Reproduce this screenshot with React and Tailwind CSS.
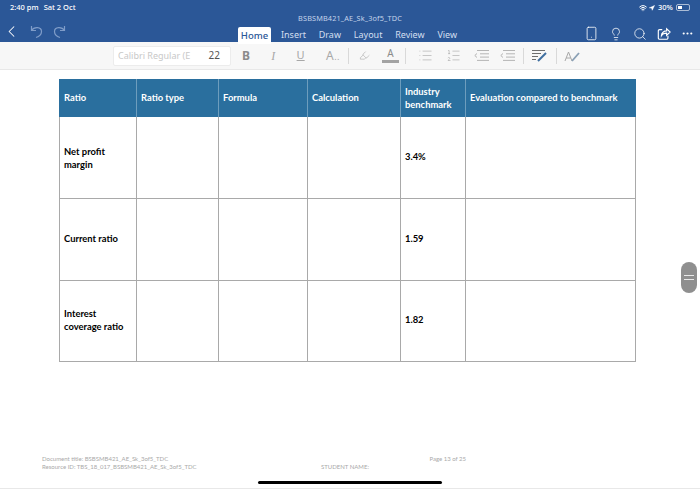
import React from "react";
import {
  ChevronLeft,
  Smartphone,
  Lightbulb,
  Search,
  Ellipsis,
  List,
  ListOrdered,
  Highlighter,
  Wifi,
  Navigation,
} from "lucide-react";

const tabs = ["Insert", "Draw", "Layout", "Review", "View"];

const rows = [
  { name: ["Net profit", "margin"], value: "3.4%", nudge: "pt-[1px]" },
  { name: ["Current ratio"], value: "1.59", nudge: "pb-[2px]" },
  { name: ["Interest", "coverage ratio"], value: "1.82", nudge: "pb-[1px]" },
];

const cols = "grid grid-cols-[78px_82px_89px_93px_65px_170px]";

const Sep = () => <div className="w-px h-[16px] bg-[#d9d9d9]" />;

const UndoIcon = ({ flip }) => (
  <svg
    width="15"
    height="15"
    viewBox="0 0 15 15"
    fill="none"
    stroke="currentColor"
    strokeWidth="1.2"
    className={flip ? "-scale-x-100" : ""}
  >
    <path d="M2.5 2v4.5H7" />
    <path d="M2.5 6.5C5 2.5 12.5 2.5 12.5 7.5C12.5 10.5 10 12.5 7 13.5" />
  </svg>
);

const ShareIcon = () => (
  <svg width="14" height="14" viewBox="0 0 16 16" fill="none" stroke="currentColor" strokeWidth="1.3">
    <path d="M6 3H3a1.5 1.5 0 0 0-1.5 1.5v8A1.5 1.5 0 0 0 3 14h8a1.5 1.5 0 0 0 1.5-1.5V10" />
    <path d="M5 10c0-3.5 3-5.5 6-5.5V2l4 3.7-4 3.8V7c-3 0-5 1.2-6 3z" />
  </svg>
);

const IndentIcon = () => (
  <svg width="15" height="11" viewBox="0 0 15 11" fill="none" stroke="#b5b5b5" strokeWidth="1">
    <path d="M3 .5h12M6 3.8h9M6 7.1h9M3 10.4h12" />
    <path d="M3 3.5L.8 5.5 3 7.5" />
  </svg>
);

const App = () => {
  return (
    <div className="relative w-[700px] h-[489px] overflow-hidden bg-white font-['Noto_Sans',sans-serif]">
      {/* blue title bar */}
      <div className="h-[42px] bg-[#2b5797] text-white flex flex-col">
        <div className="h-[14px] px-[10px] pt-[2px] flex justify-between items-center text-[7.5px] font-medium">
          <span className="flex gap-[5px]">
            <span>2:40 pm</span>
            <span>Sat 2 Oct</span>
          </span>
          <span className="flex items-center gap-[2px]">
            <Wifi size={8} strokeWidth={3} />
            <Navigation size={6} fill="white" />
            <span className="ml-[1px]">30%</span>
            <span className="ml-[1px] w-[14px] h-[7px] rounded-[2px] border border-white/60 p-[1px] flex">
              <span className="w-[4px] bg-white" />
            </span>
          </span>
        </div>
        <div className="h-[9px] pt-[1px] text-center text-[7.3px] leading-[9px] text-[#c4d3ea] tracking-[0.15px]">
          BSBSMB421_AE_Sk_3of5_TDC
        </div>
        <div className="flex-1 flex items-end relative">
          <div className="flex items-center gap-[8px] w-[238px] pl-[2px] pb-[3px] text-[#7f9cc8]">
            <ChevronLeft size={19} className="text-white" strokeWidth={1.3} />
            <UndoIcon />
            <UndoIcon flip />
          </div>
          <div className="h-[17px] w-[33px] bg-white rounded-t-[2px] text-[#2b5797] text-[9.5px] leading-[18px] font-medium text-center">
            Home
          </div>
          <div className="flex gap-[12.8px] ml-[10px] pb-[3px] text-[9px] leading-[12px] text-[#d3dff0]">
            {tabs.map((tab) => (
              <span key={tab}>{tab}</span>
            ))}
          </div>
          <div className="ml-auto flex items-center gap-[10px] pr-[6px] pb-[3px] text-white">
            <Smartphone size={15} strokeWidth={1.3} />
            <Lightbulb size={14} strokeWidth={1.3} />
            <Search size={14} strokeWidth={1.3} />
            <ShareIcon />
            <Ellipsis size={13} strokeWidth={2} />
          </div>
        </div>
      </div>

      {/* ribbon */}
      <div className="h-[28px] bg-[#f7f7f7] border-b border-[#e8e8e8] flex items-center pl-[113px] text-[#a8a8a8]">
        <div className="w-[118px] h-[20px] bg-white border border-[#ececec] rounded-[2px] flex items-center justify-between pl-[4px] pr-[10px] text-[9px] text-[#c8c8c8]">
          <span className="w-[74px] overflow-hidden whitespace-nowrap">Calibri Regular (E</span>
          <span className="text-[10px] text-[#555]">22</span>
        </div>
        <div className="flex items-center ml-[11px] text-[12px] w-[98px] justify-between">
          <span className="font-bold text-[#8b8b8b]">B</span>
          <span className="italic font-['Liberation_Serif',serif]">I</span>
          <span className="underline text-[11px]">U</span>
          <span className="text-[12px] leading-none tracking-[0.5px]">A<span className="text-[9px]">..</span></span>
        </div>
        <div className="ml-[8px]"><Sep /></div>
        <Highlighter size={11} strokeWidth={1.3} className="ml-[10px]" />
        <div className="ml-[12px] flex flex-col items-center w-[17px]">
          <span className="text-[10px] leading-[11px] text-[#8b8b8b]">A</span>
          <span className="w-[17px] h-[3px] bg-[#a3a3a3] mt-[1px]" />
        </div>
        <div className="ml-[6px]"><Sep /></div>
        <List size={15} strokeWidth={1} className="ml-[12px]" />
        <ListOrdered size={15} strokeWidth={1} className="ml-[13px]" />
        <div className="ml-[13px]"><IndentIcon /></div>
        <div className="ml-[11px]"><IndentIcon /></div>
        <div className="ml-[8px]"><Sep /></div>
        <svg width="17" height="13" viewBox="0 0 17 13" className="ml-[7px]" fill="none" stroke="#6e6e6e">
          <path d="M1 1.5h13M1 4.5h9M1 7.5h6M1 10.5h4" strokeWidth="1.2" />
          <path d="M7 12l8-8" stroke="#3f6f9f" strokeWidth="2" />
        </svg>
        <div className="ml-[8px]"><Sep /></div>
        <svg width="17" height="12" viewBox="0 0 17 12" className="ml-[7px]" fill="none" stroke="#a8a8a8">
          <path d="M1 11l3.5-9L8 11M2.2 8h4.6" strokeWidth="1" />
          <path d="M8 11l7-8" stroke="#8aa0b5" strokeWidth="1.8" />
        </svg>
      </div>

      {/* table */}
      <div className="mt-[9px] ml-[59px] w-[577px] font-['Lato',sans-serif] font-bold text-[9.4px] leading-[13px] text-black">
        <div className={`${cols} h-[38px] bg-[#2a6f9e] text-white`}>
          <div className="flex items-center pl-[5px] pb-[1px] border-r border-[#6d9dbd]">Ratio</div>
          {["Ratio type", "Formula", "Calculation"].map((h) => (
            <div key={h} className="flex items-center pl-[4px] pb-[1px] border-r border-[#6d9dbd]">
              {h}
            </div>
          ))}
          <div className="flex items-center pl-[4px] border-r border-[#6d9dbd]">
            Industry
            <br />
            benchmark
          </div>
          <div className="flex items-center pl-[4px] pb-[1px]">Evaluation compared to benchmark</div>
        </div>
        <div className="border-b border-[#a9a9a9]">
          {rows.map((row) => (
            <div key={row.value} className={`${cols} h-[81.4px] border-t border-[#a9a9a9] first:border-t-0`}>
              <div className={`flex flex-col justify-center pl-[4px] border-l border-r border-[#a9a9a9] ${row.nudge}`}>
                {row.name.map((line) => (
                  <span key={line}>{line}</span>
                ))}
              </div>
              <div className="border-r border-[#a9a9a9]" />
              <div className="border-r border-[#a9a9a9]" />
              <div className="border-r border-[#a9a9a9]" />
              <div className="flex items-center pl-[4px] pb-[2px] border-r border-[#a9a9a9]">{row.value}</div>
              <div className="border-r border-[#a9a9a9]" />
            </div>
          ))}
        </div>
      </div>

      {/* page footer */}
      <div className="mt-[93px] ml-[42px] w-[424px] grid grid-cols-[279px_1fr_auto] font-['Lato',sans-serif] text-[6px] leading-[8px] text-[#a9a9a9]">
        <span>Document title: BSBSMB421_AE_Sk_3of5_TDC</span>
        <span />
        <span>Page 13 of 25</span>
        <span>Resource ID: TBS_18_017_BSBSMB421_AE_Sk_3of5_TDC</span>
        <span>STUDENT NAME:</span>
        <span />
      </div>

      {/* scroll handle */}
      <div className="absolute left-[681px] top-[262px] w-[16px] h-[31px] rounded-full bg-[#8f8f8f] flex flex-col items-center justify-center gap-[3px]">
        <span className="w-[10px] h-px bg-white/80" />
        <span className="w-[10px] h-px bg-white/80" />
      </div>

      {/* home indicator */}
      <div className="absolute left-[258px] top-[481px] w-[184px] h-[3px] rounded-full bg-black" />
      <div className="absolute left-0 bottom-0 w-full h-px bg-[#e8e8e8]" />
    </div>
  );
};

export default App;
